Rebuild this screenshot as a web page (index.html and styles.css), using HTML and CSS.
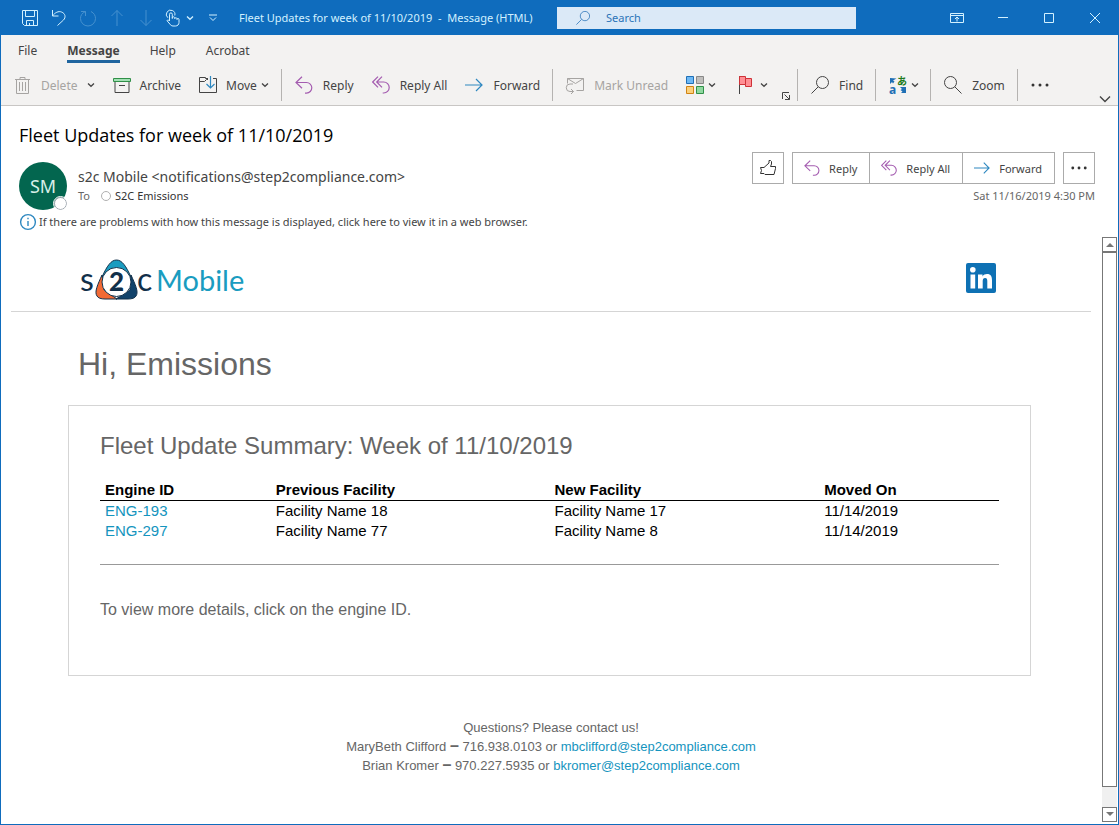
FILE: index.html
```html
<!DOCTYPE html>
<html lang="en">
<head>
<meta charset="utf-8">
<title>Fleet Updates for week of 11/10/2019 - Message (HTML)</title>
<link rel="stylesheet" href="styles.css">
</head>
<body>
<svg class="defs" width="0" height="0" aria-hidden="true">
  <symbol id="chev" viewBox="0 0 8 6"><path d="M1 1.500l3 2.800 3-2.800"/></symbol>
  <symbol id="reply" viewBox="0 0 18 18"><path d="M7 .7L1 6.500l6 5.800M1 6.500h10.500a5.300 5.300 0 0 1 0 10.600h-1.500"/></symbol>
  <symbol id="replyall" viewBox="0 0 18 18"><path d="M6 .7L.7 6l5.300 5.300M10 .7L4.700 6l5.300 5.300M4.700 6h7a5.500 5.500 0 0 1 0 11h-1"/></symbol>
  <symbol id="forward" viewBox="0 0 18 18"><path d="M0 9h17M11 3l6 6-6 6"/></symbol>
  <symbol id="lens" viewBox="0 0 18 18"><circle cx="11.500" cy="6.500" r="6"/><path d="M7.200 10.800L.5 17.500"/></symbol>
</svg>
<div class="window">
  <header class="titlebar">
    <div class="quick">
      <button aria-label="Save"><svg class="i18" viewBox="0 0 18 18"><path d="M1.500 1.500h15v15h-13l-2-2zM4.500 1.500v6h9v-6M5.500 16.500v-5h7v5M8.500 14v2.500"/></svg></button>
      <button aria-label="Undo"><svg class="i18" viewBox="0 0 18 18"><path d="M2.500 1v6h6M2.500 7C5 3.500 8.500 1.800 11.500 3c4 1.500 4.500 5.500 2 8L7.500 16.500"/></svg></button>
      <button class="dim" aria-label="Redo"><svg class="i18" viewBox="0 0 18 18"><path d="M2 2.500h4.500V7M6.500 2.500C3 4 1.500 6.500 1.500 9.500a7.500 7.500 0 0 0 15 0c0-3-1.500-5.500-4.500-7"/></svg></button>
      <button class="dim" aria-label="Previous item"><svg class="i18" viewBox="0 0 18 18"><path d="M9 17V1.500M3.500 7L9 1.500 14.500 7"/></svg></button>
      <button class="dim" aria-label="Next item"><svg class="i18" viewBox="0 0 18 18"><path d="M9 1v15.500M3.500 11L9 16.500l5.500-5.500"/></svg></button>
      <button class="touch" aria-label="Touch mode"><svg class="i18" viewBox="3 0 18 18"><path d="M4.800 8.700a4.300 4.300 0 1 1 7-2.200"/><path d="M6.500 12V5.300a1.400 1.400 0 0 1 2.800 0V9.500V8.600a1.300 1.300 0 0 1 2.400 0v1a1.200 1.200 0 0 1 2.300 0v.9a1 1 0 0 1 2 0v3c0 2-1.500 3.500-3.500 3.500H10c-1.500 0-2.500-1-3.200-2L4 11.700c.5-1 1.500-1 2.500.3"/></svg><svg class="chev"><use href="#chev"/></svg></button>
      <button class="custom" aria-label="Customize toolbar"><svg class="i8" viewBox="0 0 8 8"><path d="M0 1h8M1 3.500l3 3 3-3"/></svg></button>
    </div>
    <h1 class="caption">Fleet Updates for week of 11/10/2019&nbsp; -&nbsp; Message (HTML)</h1>
    <label class="search"><svg class="i14"><use href="#lens"/></svg><input type="text" placeholder="Search" aria-label="Search"></label>
    <div class="winctl">
      <button aria-label="Ribbon display options"><svg viewBox="0 0 14 12"><path d="M.5 1.500h13v9H.5zM.5 3.500h13M7 9.500V5M5 7l2-2 2 2"/></svg></button>
      <button aria-label="Minimize"><svg viewBox="0 0 14 12"><path d="M2 5.500h10"/></svg></button>
      <button aria-label="Maximize"><svg viewBox="0 0 14 12"><path d="M2.500 1.500h9v9h-9z"/></svg></button>
      <button aria-label="Close"><svg viewBox="0 0 14 12"><path d="M2 1l10 10M12 1L2 11"/></svg></button>
    </div>
  </header>
  <nav class="tabs">
    <button>File</button><button class="active">Message</button><button>Help</button><button>Acrobat</button>
  </nav>
  <div class="ribbon">
    <div class="group first">
      <button disabled><svg class="i18" viewBox="0 0 18 18"><path d="M1 3.500h15M6 3.500v-2h5v2M2.500 3.500v14h12v-14M5.500 6v9M8.500 6v9M11.500 6v9"/></svg>Delete<svg class="chev dark"><use href="#chev"/></svg></button>
      <button><svg class="i18" viewBox="0 0 18 18"><path d="M2 5v11.500h14V5M6 9.500h6"/><path fill="#a3e0b4" stroke="#309048" d="M.5 2.500h17v3H.5z"/></svg>Archive</button>
      <button class="menu"><svg class="i18" viewBox="0 0 18 18"><path d="M9 2.500H6.500v-1h-6v15h17v-14H14M.5 5.500h5l2-2h1.500"/><path class="blue" d="M11.500 0v12M7.500 8l4 4 4-4"/></svg><span>Move</span><svg class="chev"><use href="#chev"/></svg></button>
    </div>
    <div class="group">
      <button><svg class="i18 purple"><use href="#reply"/></svg>Reply</button>
      <button><svg class="i18 purple"><use href="#replyall"/></svg>Reply All</button>
      <button><svg class="i18 blue"><use href="#forward"/></svg>Forward</button>
    </div>
    <div class="group">
      <button disabled><svg class="i18" viewBox="0 0 18 18"><path d="M1.500 7.500v-5h16v12h-7M1.500 2.500l8 5 8-5M7 8H4a3 3 0 0 0 0 7.500h3.500M5 13l2.500 2.500L5 18"/></svg>Mark Unread</button>
      <button class="tight" aria-label="Categorize"><svg class="i18" viewBox="0 0 18 18"><path fill="#6cb8f5" stroke="#1f6fb5" d="M.5.5h7v7h-7z"/><path fill="#c0bfbd" stroke="#888" d="M10.500.5h7v7h-7z"/><path fill="#fbd07a" stroke="#d08314" d="M.5 10.500h7v7h-7z"/><path fill="#8fd8a0" stroke="#309048" d="M10.500 10.500h7v7h-7z"/></svg><svg class="chev"><use href="#chev"/></svg></button>
      <button class="tight flag" aria-label="Follow up"><svg class="i18" viewBox="0 0 18 18"><path d="M1.500 0v18"/><path fill="#ff8f94" stroke="#cf3238" d="M1.500.5h6v2h6v8h-6v-2h-6zM7.500 2.500v6"/></svg><svg class="chev"><use href="#chev"/></svg></button>
      <button class="launch" aria-label="More tag options"><svg class="i8" viewBox="0 0 8 8"><path d="M.5 7V.5H7M2.500 2.500l5 5M7.500 3v4.500H3"/></svg></button>
    </div>
    <div class="group"><button><svg class="i18"><use href="#lens"/></svg>Find</button></div>
    <div class="group"><button class="tight" aria-label="Translate"><svg class="i18" viewBox="0 0 18 18"><path fill="#1f6fb5" stroke="none" d="M1 2v6l2-2 1 1.500 1.500-2L4 4.500 7.500 2.500zM17 17v-6h-6l2 2-1.500 1 2 1.500L12 17z"/><text class="glyph a" x="0" y="18">a</text><text class="glyph ja" x="8" y="9">あ</text></svg><svg class="chev"><use href="#chev"/></svg></button></div>
    <div class="group"><button><svg class="i18" viewBox="0 0 18 18"><circle cx="6.500" cy="6.500" r="6"/><path d="M10.800 10.800l6.700 6.700"/></svg>Zoom</button></div>
    <div class="group"><button aria-label="More commands"><svg class="i18 dots" viewBox="0 0 18 18"><circle cx="2" cy="9" r="1.500"/><circle cx="9" cy="9" r="1.500"/><circle cx="16" cy="9" r="1.500"/></svg></button></div>
    <button class="collapse" aria-label="Collapse ribbon"><svg viewBox="0 0 12 8"><path d="M1 1.500l5 5 5-5"/></svg></button>
  </div>
  <main class="pane">
    <section class="msghead">
      <h2 class="subject">Fleet Updates for week of 11/10/2019</h2>
      <div class="meta">
        <div class="avatar">SM<span class="presence"></span></div>
        <div class="who">
          <div class="from">s2c Mobile &lt;notifications@step2compliance.com&gt;</div>
          <div class="to"><span>To</span><i class="ring"></i><b>S2C Emissions</b></div>
        </div>
        <div class="side">
          <div class="actions">
            <button class="solo" aria-label="Like"><svg class="i18 ink" viewBox="0 0 18 18"><path d="M1.500 8.500h3.500L10 4V1.500h1.500l1 1V5l-1 2.500h5v2l-1.500 6H6l-1-1H1.500l1-3z"/></svg></button>
            <div class="trio">
              <button><svg class="i16 purple"><use href="#reply"/></svg>Reply</button>
              <button><svg class="i16 purple"><use href="#replyall"/></svg>Reply All</button>
              <button><svg class="i16 blue"><use href="#forward"/></svg>Forward</button>
            </div>
            <button class="solo" aria-label="More actions"><svg class="i16 dots" viewBox="0 0 18 18"><circle cx="2" cy="9" r="1.600"/><circle cx="9" cy="9" r="1.600"/><circle cx="16" cy="9" r="1.600"/></svg></button>
          </div>
          <time class="date">Sat 11/16/2019 4:30 PM</time>
        </div>
      </div>
      <button class="info"><svg viewBox="0 0 16 16"><circle cx="8" cy="8" r="7.400"/><path d="M8 7v5M8 3.800v1.500"/></svg>If there are problems with how this message is displayed, click here to view it in a web browser.</button>
    </section>
    <div class="reader">
      <article class="mail">
        <div class="brand">
          <svg class="logo" viewBox="0 -3 166 44" role="img" aria-label="s2c Mobile">
            <path fill="#f26a35" stroke="#12304a" d="M22 16C18 25 14 33 17 37c1 2 4 3 8 3h12L24 31z"/>
            <path fill="#12436b" stroke="#12304a" d="M51 16c4 9 8 17 5 21-1 2-4 3-8 3H36L50 31z"/>
            <path fill="#1a9cc0" stroke="#12304a" d="M22 18C27 7 31 1 36.500 1S46 7 51 18z"/>
            <circle cx="36.500" cy="23" r="14.500" fill="#fff" stroke="#12304a"/>
            <text class="lt" x="0" y="32">s</text><text class="lt" x="57" y="32">c</text>
            <text class="l2" x="29" y="32">2</text><text class="lm" x="76" y="32">Mobile</text>
          </svg>
          <a class="linkedin" href="#" aria-label="LinkedIn"><svg viewBox="0 0 30 30"><rect width="30" height="30" rx="2" fill="#0e71b4"/><circle cx="6.800" cy="6.800" r="2.800" fill="#fff"/><path fill="#fff" d="M4.500 11.500h4.700v14H4.500zM12 11.500h4.500v2c1-1.600 2.600-2.400 4.500-2.400 4 0 5 2.700 5 6.200v8.200h-4.700v-7.300c0-1.700-.2-3.200-2.200-3.200s-2.400 1.500-2.400 3.200v7.300H12z"/></svg></a>
        </div>
        <h2 class="hi">Hi, Emissions</h2>
        <section class="card">
          <h3>Fleet Update Summary: Week of 11/10/2019</h3>
          <table>
            <colgroup><col class="c1"><col class="c2"><col class="c3"><col></colgroup>
            <thead><tr><th>Engine ID</th><th>Previous Facility</th><th>New Facility</th><th>Moved On</th></tr></thead>
            <tbody>
              <tr><td><a href="#">ENG-193</a></td><td>Facility Name 18</td><td>Facility Name 17</td><td>11/14/2019</td></tr>
              <tr><td><a href="#">ENG-297</a></td><td>Facility Name 77</td><td>Facility Name 8</td><td>11/14/2019</td></tr>
            </tbody>
          </table>
          <hr>
          <p>To view more details, click on the engine ID.</p>
        </section>
        <footer class="contact">
          <p>Questions? Please contact us!</p>
          <p>MaryBeth Clifford <b>–</b> 716.938.0103 or <a href="#">mbclifford@step2compliance.com</a></p>
          <p>Brian Kromer <b>–</b> 970.227.5935 or <a href="#">bkromer@step2compliance.com</a></p>
        </footer>
      </article>
      <div class="scroll">
        <button aria-label="Scroll up"><svg viewBox="0 0 8 5"><path d="M0 5l4-4 4 4z"/></svg></button>
        <div class="thumb"></div>
        <button aria-label="Scroll down"><svg viewBox="0 0 8 5"><path d="M0 0l4 4 4-4z"/></svg></button>
      </div>
    </div>
  </main>
</div>
</body>
</html>
```
FILE: styles.css
```css
* { box-sizing: border-box; }
body { margin: 0; font-family: "Noto Sans", "Open Sans", sans-serif; font-size: 12px; color: #444; background: #fff; }
h1, h2, h3, p { margin: 0; font-weight: 400; }
button { font: inherit; color: inherit; background: none; border: 0; padding: 0; display: flex; align-items: center; white-space: nowrap; }
svg { display: block; flex: none; fill: none; stroke: currentColor; overflow: visible; }
a { text-decoration: none; color: #1494be; }
.defs { position: absolute; }
.i18 { width: 18px; height: 18px; }
.i16 { width: 16px; height: 16px; }
.i14 { width: 14px; height: 14px; }
.i8 { width: 8px; height: 8px; }
.chev { width: 8px; height: 6px; stroke-width: 1.3; }
.purple { stroke: #a45cb0; stroke-width: 1.2; }
.blue { stroke: #2e88c0; stroke-width: 1.2; }
.dots { fill: #333; stroke: none; }

.window { display: flex; flex-direction: column; min-height: 100vh; border: 1px solid #0f6cbd; border-top: 0; }
.titlebar { display: flex; align-items: center; height: 35px; background: #0f6cbd; color: #d3f1ff; }
.quick { display: flex; gap: 11px; padding-left: 20px; width: 238px; }
.dim { opacity: .28; }
.touch { gap: 2px; }
.custom { margin-left: 4px; }
.caption { font-size: 11px; flex: 0 0 318px; white-space: nowrap; }
.search { display: flex; align-items: center; flex: 0 1 299px; height: 22px; padding-left: 19px; gap: 16px; background: #dbe9f7; color: #2b74b8; }
.search input { flex: 1; min-width: 0; border: 0; background: none; padding: 0; font: inherit; font-size: 11px; color: inherit; }
.search input::placeholder { color: #2b74b8; opacity: 1; }
.winctl { display: flex; margin-left: auto; }
.winctl button { width: 46px; height: 32px; justify-content: center; }
.winctl svg { width: 14px; height: 12px; }

.tabs { display: flex; gap: 30px; padding: 4px 17px 0; height: 31px; background: #f3f2f1; }
.tabs button { height: 24px; padding-top: 2px; border-bottom: 3px solid transparent; }
.tabs .active { font-weight: 700; border-color: #1f659f; }
.ribbon { display: flex; position: relative; height: 40px; padding: 3px 4px 4px 0; background: #f3f2f1; border-bottom: 1px solid #c8c6c4; }
.group { display: flex; align-items: stretch; padding: 0 3px 0 4px; border-left: 1px solid #b5b3b1; }
.group button { padding: 0 9px; gap: 10px; }
.first { border-left: 0; }
.first button { gap: 9px; }
.group .tight { gap: 4px; padding-right: 8px; }
.group .flag { padding-left: 14px; }
.group .menu { gap: 4px; }
.menu span { padding-left: 5px; }
.group button:disabled { color: #a6a4a2; }
.group .dark { color: #444; }
.group .launch { align-self: flex-end; padding: 0 4px 1px 6px; }
.collapse { position: absolute; right: 7px; bottom: 2px; }
.collapse svg { width: 12px; height: 8px; stroke-width: 1.4; }
.glyph { stroke: none; font-weight: 700; }
.glyph.a { fill: #1f6fb5; font-size: 12px; }
.glyph.ja { fill: #1c7a1c; font-family: "Noto Sans CJK JP", sans-serif; font-size: 10px; }

.pane { flex: 1; display: flex; flex-direction: column; }
.msghead { padding: 16px 23px 0 18px; }
.subject { font-family: "Open Sans", sans-serif; font-size: 18px; line-height: 26px; color: #000; }
.meta { display: flex; margin-top: 4px; }
.avatar { position: relative; width: 48px; height: 48px; margin-top: 10px; border-radius: 50%; background: #03664f; color: #d8efe8; font-size: 18px; display: flex; align-items: center; justify-content: center; }
.presence { position: absolute; right: 0; bottom: 0; width: 13px; height: 13px; border: 1px solid #a0a8b0; border-radius: 50%; background: #fff; outline: 1px solid #fff; }
.who { padding: 13px 0 0 11px; }
.from { font-size: 14px; line-height: 23px; }
.to { display: flex; align-items: center; font-size: 11px; line-height: 16px; color: #666; }
.to b { font-weight: 400; color: #333; margin-left: 4px; }
.ring { width: 10px; height: 10px; border: 1px solid #b0b0b0; border-radius: 50%; margin-left: 11px; }
.side { margin-left: auto; display: flex; flex-direction: column; align-items: flex-end; font-size: 11px; }
.actions { display: flex; gap: 8px; }
.solo { width: 32px; height: 32px; border: 1px solid #ababab; justify-content: center; }
.ink { stroke: #333; }
.trio { display: flex; border: 1px solid #ababab; }
.trio button { height: 30px; padding: 0 12px 0 11px; gap: 9px; }
.trio button + button { border-left: 1px solid #ababab; }
.date { line-height: 24px; color: #666; }
.info { margin: 4px 0 0 1px; gap: 3px; font-size: 11px; line-height: 16px; }
.info svg { width: 16px; height: 16px; stroke: #2e88c0; stroke-width: 1.4; }

.reader { flex: 1; display: flex; margin-top: 7px; }
.mail { flex: 1; padding: 0 11px 0 10px; font-family: "Liberation Sans", Arial, sans-serif; color: #666; }
.brand { display: flex; justify-content: space-between; align-items: center; height: 75px; padding: 8px 95px 0 69px; border-bottom: 1px solid #d5d5d5; }
.logo { width: 166px; height: 44px; stroke: none; }
.logo text { font-family: Lato, sans-serif; }
.lt { font-size: 32px; fill: #12304a; }
.l2 { font-size: 26px; font-weight: 900; fill: #12304a; }
.lm { font-size: 29px; fill: #1a9cc0; }
.linkedin svg { width: 30px; height: 30px; stroke: none; }
.hi { margin: 32px 67px 0; font-size: 32px; line-height: 40px; }
.card { margin: 21px 60px 0 57px; padding: 24px 31px 55px; border: 1px solid #d5d5d5; }
.card h3 { font-size: 24px; line-height: 32px; }
.card table { width: 100%; margin-top: 18px; border-collapse: collapse; table-layout: fixed; font-size: 15px; line-height: 20px; color: #000; }
.c1 { width: 19%; }
.c2 { width: 31%; }
.c3 { width: 30%; }
.card th, .card td { padding: 0 5px; text-align: left; }
.card th { border-bottom: 1px solid #000; }
.card hr { margin: 23px 0 0; border: 0; border-top: 1px solid #999; }
.card p { margin-top: 35px; font-size: 16px; line-height: 20px; }
.contact { margin-top: 42px; text-align: center; font-size: 13px; line-height: 19px; }
.contact b { font-size: 16px; line-height: 1; }
.scroll { display: flex; flex-direction: column; width: 15px; margin: 0 1px 2px 0; background: #f0f0f0; }
.scroll button { height: 15px; border: 1px solid #777; background: #fff; justify-content: center; }
.scroll svg { width: 8px; height: 5px; fill: #777; stroke: none; }
.thumb { flex: 1; margin-bottom: 20px; border: 1px solid #777; background: #fff; }
```
